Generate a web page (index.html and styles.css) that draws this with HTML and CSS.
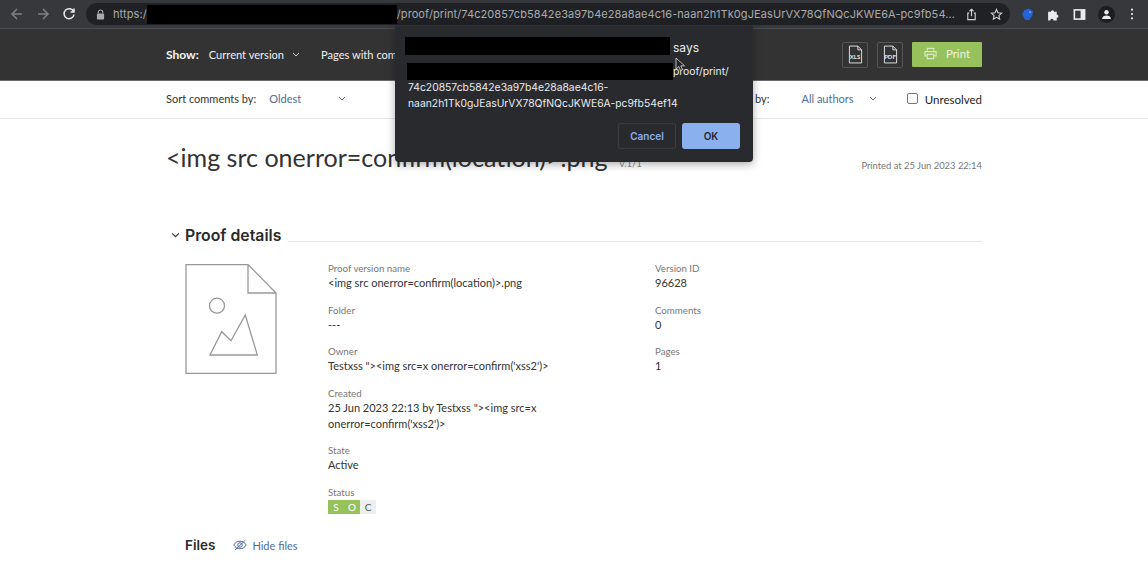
FILE: index.html
```html
<!DOCTYPE html>
<html lang="en">
<head>
<meta charset="utf-8">
<title>Proof print</title>
<link rel="stylesheet" href="styles.css">
</head>
<body>
<header class="browser">
  <svg class="bicon dim" viewBox="0 0 14 14"><path d="M12 7H2.500M7 2L2 7l5 5"/></svg>
  <svg class="bicon dim" viewBox="0 0 14 14"><path d="M2 7h9.500M7 2l5 5-5 5"/></svg>
  <svg class="bicon" viewBox="0 0 14 14"><path d="M11.600 4.600A5 5 0 1 0 12 7.500M12 1.600v3.400H8.600"/></svg>
  <div class="omnibox">
    <svg class="lock" viewBox="0 0 10 12"><path d="M2.500 5V3.500a2.500 2.500 0 0 1 5 0V5" fill="none" stroke="#a8aaad" stroke-width="1.200"/><rect x="1" y="5" width="8" height="6.500" rx="1" fill="#a8aaad"/></svg>
    <span class="url">https:/</span><span class="redact url-redact"></span><span class="url">/proof/print/74c20857cb5842e3a97b4e28a8ae4c16-naan2h1Tk0gJEasUrVX78QfNQcJKWE6A-pc9fb54...</span>
    <span class="omni-icons">
      <svg class="oicon" viewBox="0 0 14 14"><path d="M4.500 5.500H3v7h8v-7H9.500M7 9V1.500M4.800 3.500L7 1.300l2.200 2.200"/></svg>
      <svg class="oicon" viewBox="0 0 14 14"><path d="M7 1.600l1.600 3.600 3.900.4-2.900 2.600.8 3.800L7 10.100 3.600 12l.8-3.800L1.500 5.600l3.900-.4z"/></svg>
    </span>
  </div>
  <div class="ext">
    <svg class="ext-icon" viewBox="0 0 12 12"><path d="M1 6l2-4 4-1.500L11 3l-.5 4-3 4H4z" fill="#2563d8"/><path d="M8 2.500l1.500 1.600-2 .6z" fill="#a9c4f4"/></svg>
    <svg class="ext-icon" viewBox="0 0 12 12"><path d="M1 3.500h2.600a1.500 1.500 0 1 1 3 0h2.400V6a1.500 1.500 0 1 1 0 3v2.500H6a1.500 1.500 0 1 0-3 0H1z" fill="#e8eaed"/></svg>
    <svg class="ext-icon" viewBox="0 0 12 12"><rect x="0.500" y="1" width="11" height="10" fill="#e8eaed"/><rect x="2" y="2.500" width="5" height="7" fill="#36383b"/></svg>
    <div class="avatar"><svg viewBox="0 0 12 12"><circle cx="6" cy="3.600" r="2.400" fill="#e8eaed"/><path d="M1.200 11c0-2.800 2.300-4 4.800-4s4.800 1.200 4.800 4z" fill="#e8eaed"/></svg></div>
    <svg class="ext-icon menu" viewBox="0 0 4 14"><circle cx="2" cy="2" r="1.300" fill="#e8eaed"/><circle cx="2" cy="7" r="1.300" fill="#e8eaed"/><circle cx="2" cy="12" r="1.300" fill="#e8eaed"/></svg>
  </div>
</header>

<section class="toolbar">
  <strong class="show">Show:</strong>
  <span class="tool-select">Current version <svg class="chev chev-light" viewBox="0 0 8 5"><path d="M1 1l3 3 3-3"/></svg></span>
  <span class="tool-select">Pages with comments</span>
  <div class="tool-actions">
    <button class="file-btn"><svg viewBox="0 0 16 20"><path d="M1.500 1h9l4 4v14h-13zM10.500 1v4h4"/></svg><span>XLS</span></button>
    <button class="file-btn"><svg viewBox="0 0 16 20"><path d="M1.500 1h9l4 4v14h-13zM10.500 1v4h4"/></svg><span>PDF</span></button>
    <button class="print-btn">
      <svg viewBox="0 0 14 13"><path d="M3.500 3.500V1h7v2.500M3.500 9H1V4.500h12V9h-2.500M3.500 7.500h7V12h-7z"/></svg>
      Print
    </button>
  </div>
</section>

<section class="filters">
  <span>Sort comments by:</span>
  <span class="select sort-select">Oldest <svg class="chev" viewBox="0 0 8 5"><path d="M1 1l3 3 3-3"/></svg></span>
  <span class="author-label">Filter by:</span>
  <span class="select author-select">All authors <svg class="chev" viewBox="0 0 8 5"><path d="M1 1l3 3 3-3"/></svg></span>
  <label class="unresolved"><span class="checkbox"></span>Unresolved</label>
</section>

<main class="content">
  <div class="title-row">
    <h1>&lt;img src onerror=confirm(location)&gt;.png</h1>
    <span class="version">v.1/1</span>
    <span class="printed">Printed at 25 Jun 2023 22:14</span>
  </div>

  <div class="section-head">
    <svg class="chev chev-dark" viewBox="0 0 8 5"><path d="M1 1l3 3 3-3"/></svg>
    <h2>Proof details</h2>
    <span class="rule"></span>
  </div>

  <div class="details">
    <svg class="thumb" viewBox="0 0 92 110"><path d="M1 .5h62l28 28.500v80.500H1zM63 .5V29h28"/><circle cx="32" cy="41.700" r="7.500"/><path d="M25 91l11.700-23.300 9.300 9L60.300 51l12 40z"/></svg>
    <div class="col col-main">
      <div class="field"><label>Proof version name</label><p>&lt;img src onerror=confirm(location)&gt;.png</p></div>
      <div class="field"><label>Folder</label><p>---</p></div>
      <div class="field"><label>Owner</label><p>Testxss "&gt;&lt;img src=x onerror=confirm('xss2')&gt;</p></div>
      <div class="field"><label>Created</label><p>25 Jun 2023 22:13 by Testxss "&gt;&lt;img src=x<br>onerror=confirm('xss2')&gt;</p></div>
      <div class="field"><label>State</label><p>Active</p></div>
      <div class="field"><label>Status</label>
        <div class="status"><span class="on">S</span><span class="on">O</span><span class="off">C</span></div>
      </div>
    </div>
    <div class="col">
      <div class="field"><label>Version ID</label><p>96628</p></div>
      <div class="field"><label>Comments</label><p>0</p></div>
      <div class="field"><label>Pages</label><p>1</p></div>
    </div>
  </div>

  <div class="files">
    <h3>Files</h3>
    <a class="hide-files">
      <svg viewBox="0 0 14 12"><path d="M.8 6C2.200 3.500 4.400 2.200 7 2.200S11.800 3.500 13.200 6C11.800 8.500 9.600 9.800 7 9.800S2.200 8.500.8 6z"/><circle cx="7" cy="6" r="2.300"/><path d="M2 11L12.500 1"/></svg>
      Hide files
    </a>
  </div>
</main>

<div class="dialog" role="dialog">
  <div class="dialog-title"><span class="redact title-redact"></span><span>says</span></div>
  <div class="dialog-msg"><span class="redact msg-redact"></span>proof/print/<br>74c20857cb5842e3a97b4e28a8ae4c16-<br>naan2h1Tk0gJEasUrVX78QfNQcJKWE6A-pc9fb54ef14</div>
  <div class="dialog-actions">
    <button class="cancel">Cancel</button>
    <button class="ok">OK</button>
  </div>
</div>
<svg class="cursor" viewBox="0 0 10 15"><path d="M1 1v11l2.800-2.500L5.500 13.500l2-.8L5.800 8.800H9.500z"/></svg>
</body>
</html>
```

FILE: styles.css
```css
* { box-sizing: border-box; }
html, body { margin: 0; height: 567px; overflow: hidden; }
body { font-family: "Lato", "Liberation Sans", sans-serif; background: #fff; color: #333; font-size: 11px; }
p, h1, h2, h3 { margin: 0; }
button { font-family: inherit; }

.browser { height: 29px; background: #36383b; border-bottom: 1px solid #4a4c4f; display: flex; align-items: center; padding-left: 10px; font-family: "Inter", sans-serif; }
.bicon { width: 14px; height: 14px; margin-right: 12px; fill: none; stroke: #e8eaed; stroke-width: 1.500; flex: none; }
.bicon.dim { stroke: #7d8083; }
.omnibox { margin-left: -2px; width: 924px; height: 22px; background: #202124; border-radius: 11px; display: flex; align-items: center; padding: 0 7px 0 10px; flex: none; }
.lock { width: 9px; height: 11px; margin-right: 8px; flex: none; }
.url { color: #a8aaad; font-size: 11px; letter-spacing: 0.090px; white-space: nowrap; flex: none; }
.redact { display: inline-block; background: #000; flex: none; }
.url-redact { width: 250px; height: 19px; }
.omni-icons { margin-left: auto; display: flex; gap: 12px; }
.oicon { width: 13px; height: 13px; fill: none; stroke: #d0d2d5; stroke-width: 1.200; }
.ext { display: flex; align-items: center; margin-left: 11px; gap: 13px; }
.ext-icon { width: 13px; height: 13px; }
.ext-icon.menu { width: 4px; height: 12px; margin-left: 2px; }
.avatar { width: 17px; height: 17px; border-radius: 50%; background: #1d1e20; display: flex; align-items: center; justify-content: center; margin-left: -1px; }
.avatar svg { width: 11px; height: 11px; }

.toolbar { height: 52px; background: #333; border-bottom: 1px solid #6a6a6a; display: flex; align-items: center; padding: 0 166px; color: #f0f0f0; font-size: 11.100px; }
.show { color: #f5f5f5; font-size: 12px; margin-right: 10px; }
.tool-select { display: inline-flex; align-items: center; white-space: nowrap; margin-right: 21px; }
.chev { width: 8px; height: 5px; fill: none; stroke: #4f6d9b; stroke-width: 1; margin-left: 8px; }
.chev-light { stroke: #ccc; }
.tool-actions { margin-left: auto; display: flex; align-items: center; gap: 9px; }
.file-btn { width: 26px; height: 26px; padding: 0; background: transparent; border: 1px solid #555; border-radius: 2px; position: relative; display: flex; align-items: center; justify-content: center; }
.file-btn svg { width: 15px; height: 19px; fill: none; stroke: #e6e6e6; stroke-width: 1; }
.file-btn span { position: absolute; left: 0; right: 0; top: 10px; font-size: 6px; font-weight: 700; color: #e6e6e6; text-align: center; }
.print-btn { width: 70px; height: 25px; background: #97c15b; color: #eef5e2; border: 0; border-radius: 1px; font-size: 11.500px; display: flex; align-items: center; justify-content: center; gap: 9px; padding: 0 0 2px; }
.print-btn svg { width: 13px; height: 13px; fill: none; stroke: #dbe9c5; stroke-width: 1.200; }

.filters { height: 38px; border-bottom: 1px solid #e6e6e6; display: flex; align-items: center; padding: 0 166px 2px; font-size: 11px; color: #333; }
.select { color: #4f6d9b; display: inline-flex; align-items: center; }
.sort-select { margin-left: 13px; width: 458px; flex: none; }
.sort-select .chev { margin-left: 37px; }
.author-label { white-space: nowrap; }
.author-select { margin-left: 32px; }
.author-select .chev { margin-left: 15px; }
.unresolved { margin-left: auto; margin-top: 2px; font-size: 11.500px; display: flex; align-items: center; gap: 7px; color: #222; }
.checkbox { width: 11px; height: 11px; border: 1px solid #777; border-radius: 2px; background: #fff; margin-top: -3px; }

.content { padding: 0 166px; }
.title-row { display: flex; align-items: baseline; height: 98px; padding-top: 20px; }
h1 { font-weight: 400; font-size: 25.050px; color: #333; white-space: nowrap; line-height: 36px; }
.version { color: #8a8a8a; font-size: 9.600px; margin-left: 12px; }
.printed { margin-left: auto; color: #777; font-size: 9.400px; position: relative; top: 2px; }

.section-head { display: flex; align-items: flex-end; height: 26px; margin-top: 4px; font-family: "Inter", sans-serif; }
.chev-dark { stroke: #333; width: 9px; height: 6px; margin: 0 5px 9px 5px; }
h2 { font-size: 15.800px; font-weight: 600; color: #2a2a2a; line-height: 22px; }
.rule { flex: 1; border-bottom: 1px solid #e6e6e6; margin-left: 7px; margin-bottom: 5px; }

.details { display: flex; padding-top: 17px; }
.thumb { width: 92px; height: 110px; margin-left: 19px; fill: none; stroke: #999; stroke-width: 1.300; flex: none; }
.col { width: 327px; margin-top: -2px; }
.col-main { margin-left: 51px; }
.field { margin-bottom: 12.500px; }
.field label { display: block; color: #777; font-size: 9.700px; line-height: 13px; }
.field p { font-size: 11px; line-height: 16px; color: #333; }
.status { display: flex; height: 14px; margin-top: 1px; font-size: 10px; line-height: 14px; }
.status span { display: block; text-align: center; }
.status .on { width: 16px; background: #97c15b; color: #fff; }
.status .off { width: 16px; background: #eee; color: #555; }

.files { display: flex; align-items: center; margin-top: 11px; margin-left: 19px; }
h3 { font-size: 13.500px; font-weight: 600; color: #2a2a2a; font-family: "Inter", sans-serif; }
.hide-files { display: inline-flex; align-items: center; margin-left: 18px; color: #4f6d9b; font-size: 11px; gap: 5px; }
.hide-files svg { width: 14px; height: 12px; fill: none; stroke: #4f6d9b; stroke-width: 1; }

.dialog { position: absolute; left: 395px; top: 26px; width: 358px; height: 136px; background: #292a2d; border-radius: 0 0 4px 4px; box-shadow: 0 2px 8px rgba(0,0,0,.35); color: #e8eaed; padding: 12px 10px 0; font-family: "Inter", sans-serif; }
.dialog-title { display: flex; align-items: center; font-size: 12px; height: 18px; }
.title-redact { width: 265px; height: 18px; margin: -2px 3px 0 0; }
.dialog-msg { font-size: 10.350px; line-height: 16px; margin: 7px 0 0 3px; white-space: nowrap; }
.msg-redact { width: 266px; height: 17px; margin: 0 0 -1px -1px; vertical-align: top; }
.dialog-actions { display: flex; justify-content: flex-end; gap: 6px; margin-top: 12px; padding-right: 3px; }
.dialog-actions button { height: 26px; border-radius: 3px; font-size: 10px; font-weight: 600; padding: 0; }
.cancel { width: 58px; background: #292a2d; border: 1px solid #3c3d40; color: #8ab0ee; }
.ok { width: 58px; background: #8ab0ee; border: 0; color: #26282c; }
.cursor { position: absolute; left: 675px; top: 57px; width: 10px; height: 15px; fill: #222; stroke: #ddd; stroke-width: .8; }
```
